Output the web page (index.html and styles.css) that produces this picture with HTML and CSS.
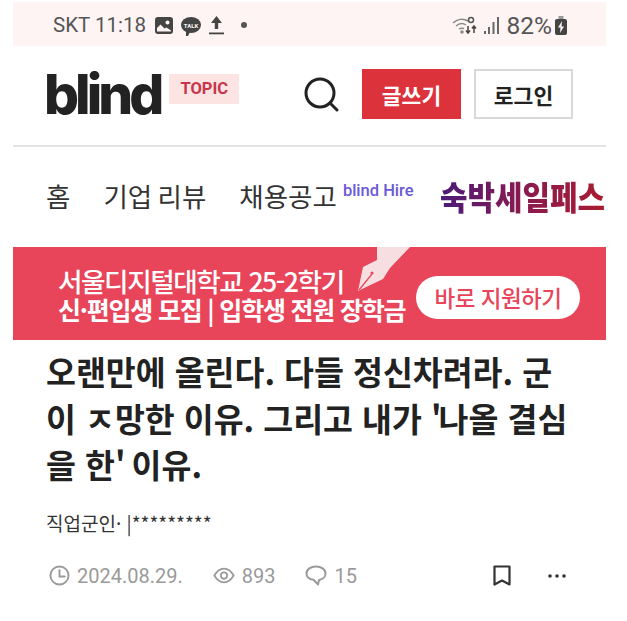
FILE: index.html
```html
<!DOCTYPE html>
<html lang="ko">
<head>
    <meta charset="UTF-8">
    <title>blind</title>
    <link rel="stylesheet" href="styles.css">
</head>
<body>
    <div class="screen">
        <div class="status-bar">
            <div class="status-left">
                <span class="clock">SKT 11:18</span>
                <svg class="st-icon" width="18" height="17" viewBox="0 0 18 17"><rect width="18" height="17" rx="3" fill="#444"/><circle cx="12.500" cy="5.500" r="2" fill="#fdf4f3"/><path d="M2 14.500V11l3.500-3.500 4 4 2-1 4.500 3v1z" fill="#fdf4f3"/></svg>
                <span class="talk">TALK</span>
                <svg class="st-icon" width="15" height="20" viewBox="0 0 15 20"><path d="M7.500 1L2 8h3.800v6h3.400V8H13z" fill="#444"/><rect y="17.500" width="15" height="1.800" fill="#444"/></svg>
                <span class="dot"></span>
            </div>
            <div class="status-right">
                <svg class="wifi" width="27" height="20" viewBox="0 0 27 20" fill="none" stroke="#888" stroke-width="1.500"><path d="M1 8c4-4 10-5 15-2"/><path d="M4 11c3-2.500 7-3 10-1"/><path d="M7 14c1.500-1 3-1 5-.5"/><circle cx="10" cy="17" r="1" fill="#888"/><path d="M16 11v7M14 15.500l2 2.500 2-2.500M22 18v-7M20 13.500l2-2.500 2 2.500" stroke="#444"/><circle cx="19" cy="5" r="2.500" stroke="#555"/></svg>
                <svg class="signal" width="15" height="18" viewBox="0 0 15 18" fill="#666"><rect y="15" width="2" height="3"/><rect x="4" y="11" width="2" height="7"/><rect x="8.500" y="6" width="2" height="12"/><rect x="13" y="1" width="2" height="17"/></svg>
                <span class="battery-text">82%</span>
                <svg width="12" height="19" viewBox="0 0 12 19"><path d="M3.500 0h5v3h-5z" fill="#999"/><rect y="3" width="12" height="16" rx="2" fill="#444"/><path d="M7 5L3 11.500h2.500L5 17l4-6.500H6.500z" fill="#fdf4f3"/></svg>
            </div>
        </div>

        <header class="top-header">
            <div class="brand">
                <span class="logo">blind</span>
                <span class="topic">TOPIC</span>
            </div>
            <svg class="search" width="36" height="36" viewBox="0 0 36 36" fill="none" stroke="#222" stroke-width="3" stroke-linecap="round"><circle cx="17" cy="17" r="14"/><path d="M27 27l7 7"/></svg>
            <a class="btn btn-write">글쓰기</a>
            <a class="btn btn-login">로그인</a>
        </header>

        <nav class="nav">
            <a class="nav-item">홈</a>
            <a class="nav-item">기업 리뷰</a>
            <a class="nav-item">채용공고<sup class="hire">blind Hire</sup></a>
            <a class="promo">숙박세일페스</a>
        </nav>

        <div class="banner">
            <div class="banner-text">
                <div class="banner-l1">서울디지털대학교 25-2학기</div>
                <div class="banner-l2">신·편입생 모집 | 입학생 전원 장학금</div>
            </div>
            <svg class="pen" width="52" height="44" viewBox="0 0 52 44"><path d="M19 0h33L32 21l-7 11L0 44 5 20l14-7z" fill="#f7dfe1"/><path d="M1 43L14 27" stroke="#e8445a" stroke-width="1.200"/><circle cx="14" cy="26" r="1.500" fill="#e8445a"/></svg>
            <div class="banner-cta">바로 지원하기</div>
        </div>

        <article class="post">
            <h1 class="post-title">오랜만에 올린다. 다들 정신차려라. 군<br>이 ㅈ망한 이유. 그리고 내가 <span class="quote">'</span>나올 결심<br>을 한<span class="quote">'</span> 이유.</h1>
            <div class="author">직업군인· |*********</div>
            <div class="meta">
                <span class="meta-item">
                    <svg width="21" height="21" viewBox="0 0 22 22" fill="none" stroke="#9a9a9a" stroke-width="2" stroke-linecap="round"><circle cx="11" cy="11" r="9.500"/><path d="M11 5.500V12h5.500"/></svg>
                    2024.08.29.
                </span>
                <span class="meta-item">
                    <svg width="22" height="17" viewBox="0 0 24 18" fill="none" stroke="#9a9a9a" stroke-width="2"><path d="M1.500 9C5 3 8 1.500 12 1.500S19 3 22.500 9C19 15 16 16.500 12 16.500S5 15 1.500 9z"/><circle cx="12" cy="9" r="3.500"/></svg>
                    893
                </span>
                <span class="meta-item">
                    <svg width="22" height="21" viewBox="0 0 22 21" fill="none" stroke="#9a9a9a" stroke-width="2" stroke-linejoin="round"><path d="M11 1.500c5 0 9.500 2.800 9.500 7 0 3.500-3 6-6.500 6.500l-1 4.500-4.500-4.700C4.500 14.300 1.500 12 1.500 8.500c0-4.200 4.500-7 9.500-7z"/></svg>
                    15
                </span>
                <span class="meta-actions">
                    <svg width="18" height="21" viewBox="0 0 18 21" fill="none" stroke="#333" stroke-width="2.200" stroke-linejoin="round"><path d="M1.500 1.500h15v18L9 15.500 1.500 19.500z"/></svg>
                    <svg width="18" height="4" viewBox="0 0 18 4" fill="#333"><circle cx="2" cy="2" r="1.800"/><circle cx="9" cy="2" r="1.800"/><circle cx="16" cy="2" r="1.800"/></svg>
                </span>
            </div>
        </article>
    </div>
</body>
</html>
```

FILE: styles.css
```css
* {
    margin: 0;
    padding: 0;
    box-sizing: border-box;
}

body {
    font-family: 'Noto Sans CJK KR', 'Noto Sans', sans-serif;
    background: #ffffff;
    color: #222222;
    overflow: hidden;
}

.screen {
    width: 593px;
    height: 621px;
    margin: 0 0 0 13px;
    padding-top: 2px;
    overflow: hidden;
}

.status-bar {
    height: 44px;
    background: #fdf4f3;
    display: flex;
    justify-content: space-between;
    align-items: center;
    padding: 2px 39px 0 40px;
    color: #555555;
    font-family: 'Roboto', sans-serif;
    font-size: 20.500px;
}

.status-left, .status-right {
    display: flex;
    align-items: center;
    gap: 8px;
}

.status-right {
    gap: 3px;
}

.clock {
    margin-right: 1px;
}

.talk {
    position: relative;
    width: 20px;
    height: 16px;
    background: #444444;
    border-radius: 50%;
    display: flex;
    align-items: center;
    justify-content: center;
    color: #fdf4f3;
    font-size: 6px;
    font-weight: 700;
}

.talk::after {
    content: '';
    position: absolute;
    left: 5px;
    bottom: -3px;
    border-left: 2px solid #444444;
    border-top: 4px solid #444444;
    border-right: 2px solid transparent;
}

.dot {
    width: 6px;
    height: 6px;
    border-radius: 50%;
    background: #555555;
    margin-left: 9px;
}

.signal {
    margin-left: 2px;
}

.battery-text {
    font-size: 24.500px;
    margin-left: 5px;
}

.top-header {
    height: 101px;
    display: flex;
    align-items: center;
    padding: 0 33px 3px;
    border-bottom: 2px solid #e4e4e4;
}

.brand {
    display: flex;
    align-items: flex-start;
    flex: 1;
}

.logo {
    font-family: 'Inter', sans-serif;
    font-weight: 800;
    font-size: 55px;
    line-height: 56px;
    letter-spacing: -4px;
    color: #222222;
    margin-left: -2px;
}

.topic {
    background: #fce4e2;
    color: #c8344a;
    font-family: 'Roboto', sans-serif;
    font-weight: 700;
    font-size: 16.500px;
    line-height: 30px;
    width: 70px;
    text-align: center;
    margin: 8px 0 0 9px;
}

.search {
    margin-right: 23px;
}

.btn {
    height: 50px;
    display: flex;
    align-items: center;
    justify-content: center;
    font-size: 21.500px;
    font-weight: 700;
}

.btn-write {
    width: 99px;
    background: #dc323c;
    color: #ffffff;
}

.btn-login {
    width: 99px;
    margin-left: 13px;
    background: #ffffff;
    border: 2px solid #d9d9d9;
    color: #222222;
}

.nav {
    height: 97px;
    display: flex;
    align-items: center;
    padding: 0 0 0 33px;
    font-size: 26.500px;
    white-space: nowrap;
    overflow: hidden;
}

.nav-item {
    margin-right: 33px;
    color: #333333;
    line-height: 36px;
    word-spacing: -2px;
}

.hire {
    font-family: 'Roboto', sans-serif;
    font-size: 16.500px;
    font-weight: 500;
    color: #6a5ad8;
    margin-left: 6px;
    vertical-align: 11px;
    line-height: 0;
    word-spacing: 0;
}

.promo {
    flex: none;
    margin-left: -7px;
    font-size: 33px;
    font-weight: 900;
    background: linear-gradient(90deg, #4a1a78 0%, #8a1a50 50%, #a81c30 100%);
    -webkit-background-clip: text;
    background-clip: text;
    color: transparent;
    transform: scaleX(0.905);
    transform-origin: left center;
}

.banner {
    height: 93px;
    margin-top: 3px;
    background: #e8445a;
    display: flex;
    align-items: center;
    position: relative;
    padding-left: 45px;
    color: #ffffff;
}

.banner-text {
    font-weight: 700;
    padding-top: 2px;
}

.banner-l1 {
    font-size: 26.700px;
    line-height: 28px;
    letter-spacing: -1.500px;
    font-weight: 500;
}

.banner-l2 {
    font-size: 25px;
    line-height: 28px;
    letter-spacing: -1.200px;
}

.pen {
    position: absolute;
    left: 345px;
    top: 0;
}

.banner-cta {
    margin-left: auto;
    margin-right: 26px;
    margin-top: 7px;
    flex: none;
    width: 164px;
    height: 43px;
    background: #ffffff;
    border-radius: 22px;
    color: #e8445a;
    font-size: 22.500px;
    font-weight: 500;
    display: flex;
    align-items: center;
    justify-content: center;
    letter-spacing: -0.500px;
}

.post {
    padding: 8px 33px 0;
}

.post-title {
    font-size: 32.500px;
    font-weight: 700;
    line-height: 46.500px;
    color: #222222;
    white-space: nowrap;
}

.quote {
    letter-spacing: -3px;
}

.author {
    margin-top: 22px;
    font-size: 19px;
    line-height: 26px;
    color: #333333;
}

.meta {
    margin-top: 28px;
    margin-left: 3px;
    display: flex;
    align-items: center;
    font-family: 'Roboto', sans-serif;
    font-size: 20px;
    color: #9a9a9a;
}

.meta-item {
    display: flex;
    align-items: center;
    gap: 7px;
    margin-right: 30px;
}

.meta-actions {
    margin-left: auto;
    display: flex;
    align-items: center;
    gap: 37px;
    padding-right: 7px;
}
```
